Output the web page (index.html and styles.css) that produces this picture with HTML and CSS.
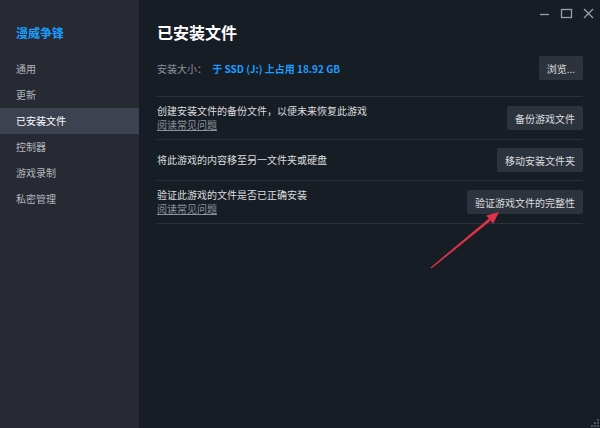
FILE: index.html
```html
<!DOCTYPE html>
<html lang="zh-CN">
<head>
    <meta charset="UTF-8">
    <title>漫威争锋 - 已安装文件</title>
    <link rel="stylesheet" href="styles.css">
</head>
<body>
    <div class="window">
        <aside class="sidebar">
            <div class="game-title">漫威争锋</div>
            <ul class="nav">
                <li>通用</li>
                <li>更新</li>
                <li class="active">已安装文件</li>
                <li>控制器</li>
                <li>游戏录制</li>
                <li>私密管理</li>
            </ul>
        </aside>

        <main class="content">
            <h1>已安装文件</h1>

            <div class="row size-row">
                <div class="size-text">
                    <span class="size-label">安装大小：</span>
                    <span class="size-value">于 SSD (J:) 上占用 18.92 GB</span>
                </div>
                <button class="btn">浏览...</button>
            </div>

            <div class="row">
                <div class="row-text">
                    <div>创建安装文件的备份文件，以便未来恢复此游戏</div>
                    <a class="faq">阅读常见问题</a>
                </div>
                <button class="btn">备份游戏文件</button>
            </div>

            <div class="row">
                <div class="row-text">
                    <div>将此游戏的内容移至另一文件夹或硬盘</div>
                </div>
                <button class="btn">移动安装文件夹</button>
            </div>

            <div class="row">
                <div class="row-text">
                    <div>验证此游戏的文件是否已正确安装</div>
                    <a class="faq">阅读常见问题</a>
                </div>
                <button class="btn">验证游戏文件的完整性</button>
            </div>
        </main>

        <!-- window buttons -->
        <div class="win-controls">
            <svg width="60" height="16" viewBox="0 0 60 16">
                <line x1="3" y1="10.5" x2="12" y2="10.5" stroke="#9aa0a6" stroke-width="1.3"/>
                <rect x="24.5" y="5.5" width="10" height="8" fill="none" stroke="#9aa0a6" stroke-width="1.3"/>
                <path d="M47 5 L56 14 M56 5 L47 14" stroke="#9aa0a6" stroke-width="1.3"/>
            </svg>
        </div>

        <!-- red annotation arrow -->
        <svg class="arrow" width="600" height="428" viewBox="0 0 600 428">
            <polygon points="430.6,267.4 431.4,268.6 490.9,220.6 488.9,218.6" fill="#e0324b"/>
            <polygon points="499,212 493.2,223.8 486.2,215.4" fill="#e0324b"/>
        </svg>

        <svg class="grip" width="12" height="12" viewBox="0 0 12 12">
            <rect x="9" y="3" width="2" height="2" fill="#4a525c"/>
            <rect x="6" y="6" width="2" height="2" fill="#4a525c"/>
            <rect x="9" y="6" width="2" height="2" fill="#4a525c"/>
            <rect x="3" y="9" width="2" height="2" fill="#4a525c"/>
            <rect x="6" y="9" width="2" height="2" fill="#4a525c"/>
            <rect x="9" y="9" width="2" height="2" fill="#4a525c"/>
        </svg>
    </div>
</body>
</html>
```

FILE: styles.css
```css
/* General */
body {
    margin: 0;
    font-family: "Noto Sans CJK SC", "Noto Sans", sans-serif;
    background: #171d25;
    color: #dcdedf;
}

.window {
    position: relative;
    display: flex;
    width: 600px;
    height: 428px;
    overflow: hidden;
}

/* Sidebar */
.sidebar {
    width: 139px;
    flex-shrink: 0;
    background: #272a33;
}

.game-title {
    padding: 24px 0 0 16px;
    height: 18px;
    line-height: 18px;
    font-size: 12px;
    font-weight: bold;
    color: #1a9fff;
    margin-bottom: 14px;
}

.nav {
    list-style: none;
    margin: 0;
    padding: 0;
}

.nav li {
    height: 26px;
    line-height: 26px;
    padding-left: 16px;
    font-size: 10px;
    color: #b3b7bd;
}

.nav li.active {
    background: #3d4250;
    color: #ffffff;
}

/* Main content */
.content {
    flex: 1;
    padding: 20px 17px 0 18px;
}

h1 {
    margin: 0 0 12px;
    font-size: 16px;
    line-height: 24px;
    font-weight: bold;
    color: #ffffff;
}

.row {
    display: flex;
    align-items: center;
    justify-content: space-between;
    padding: 7px 0;
    border-bottom: 1px solid #2a313b;
    font-size: 10px;
}

.size-row {
    padding: 0 0 16px;
}

.size-label {
    color: #8b929a;
    margin-right: 3px;
}

.size-value {
    color: #1a9fff;
    font-weight: bold;
}

.row-text {
    display: flex;
    flex-direction: column;
    justify-content: center;
    min-height: 26px;
    line-height: 14px;
    color: #dcdedf;
}

.faq {
    align-self: flex-start;
    color: #8b929a;
    text-decoration: underline;
}

.btn {
    height: 24px;
    padding: 0 8px;
    border: none;
    border-radius: 2px;
    background: #2d333d;
    color: #dcdedf;
    font-family: inherit;
    font-size: 10px;
}

/* Window chrome and overlay */
.win-controls {
    position: absolute;
    top: 1px;
    right: 3px;
}

.arrow {
    position: absolute;
    top: 0;
    left: 0;
    pointer-events: none;
}

.grip {
    position: absolute;
    right: 0;
    bottom: 0;
}
```
